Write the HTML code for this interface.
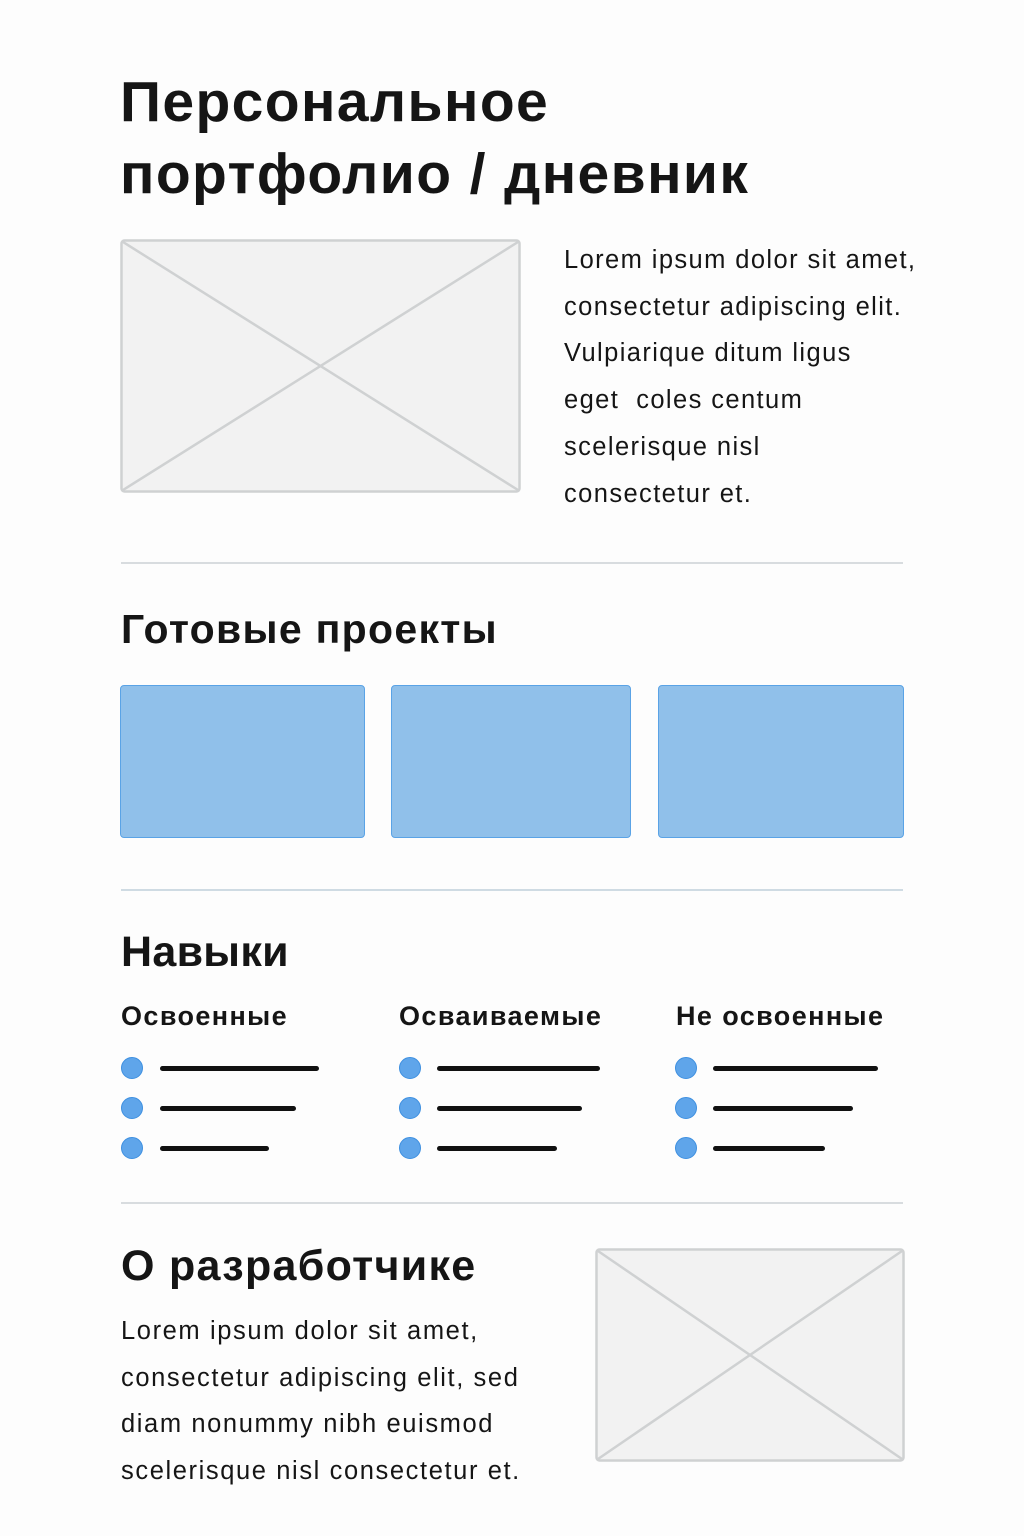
<!DOCTYPE html>
<html><head><meta charset="utf-8"><style>
*{margin:0;padding:0;box-sizing:border-box}
body{width:1024px;height:1536px;background:#fdfdfd;position:relative;font-family:"Liberation Sans","DejaVu Sans",sans-serif;color:#151515;overflow:hidden}
.a{position:absolute;white-space:nowrap}
h1{position:absolute;left:120px;top:66px;font-size:57px;line-height:72px;font-weight:bold;letter-spacing:1.4px}
.txt{font-size:25.5px;line-height:46.7px;letter-spacing:1.4px}
.hr{position:absolute;left:121px;width:782px;height:2px;background:#d8dcdf}
.blue{position:absolute;top:685px;height:153px;background:#90c0ea;border:1.5px solid #5aa3e6;border-radius:4px}
.h2{font-size:41px;font-weight:bold;letter-spacing:1.3px}
.h3{font-size:27px;font-weight:bold;letter-spacing:1.4px}
.dot{position:absolute;width:22px;height:22px;border-radius:50%;background:#5fa5ea;border:1px solid #3d8fe0}
.ln{position:absolute;height:5px;border-radius:3px;background:#111}
</style></head><body>
<h1>Персональное<br>портфолио / дневник</h1>
<svg class="a" style="left:120px;top:239px" width="401" height="254"><rect x="1.5" y="1.5" width="398" height="251" rx="3" fill="#f2f2f2" stroke="#cfd1d2" stroke-width="2.5"/><line x1="3" y1="3" x2="398" y2="251" stroke="#cfd1d2" stroke-width="2.5"/><line x1="398" y1="3" x2="3" y2="251" stroke="#cfd1d2" stroke-width="2.5"/></svg>
<div class="a txt" style="left:564px;top:237px">Lorem ipsum dolor sit amet,<br>consectetur adipiscing elit.<br>Vulpiarique ditum ligus<br>eget&nbsp; coles centum<br>scelerisque nisl<br>consectetur et.</div>
<div class="hr" style="top:562px"></div>
<div class="a h2" style="left:121px;top:606px">Готовые проекты</div>
<div class="blue" style="left:120px;width:245px"></div>
<div class="blue" style="left:391px;width:240px"></div>
<div class="blue" style="left:658px;width:246px"></div>
<div class="hr" style="top:889px;background:#cfdbe3"></div>
<div class="a h2" style="left:121px;top:928px;font-size:43px;letter-spacing:0.3px">Навыки</div>
<div class="a h3" style="left:121px;top:1001px">Освоенные</div>
<div class="a h3" style="left:399px;top:1001px">Осваиваемые</div>
<div class="a h3" style="left:676px;top:1001px">Не освоенные</div>
<div class="dot" style="left:121px;top:1057px"></div><div class="ln" style="left:160px;top:1066px;width:159px"></div>
<div class="dot" style="left:121px;top:1097px"></div><div class="ln" style="left:160px;top:1106px;width:136px"></div>
<div class="dot" style="left:121px;top:1137px"></div><div class="ln" style="left:160px;top:1146px;width:109px"></div>
<div class="dot" style="left:399px;top:1057px"></div><div class="ln" style="left:437px;top:1066px;width:163px"></div>
<div class="dot" style="left:399px;top:1097px"></div><div class="ln" style="left:437px;top:1106px;width:145px"></div>
<div class="dot" style="left:399px;top:1137px"></div><div class="ln" style="left:437px;top:1146px;width:120px"></div>
<div class="dot" style="left:675px;top:1057px"></div><div class="ln" style="left:713px;top:1066px;width:165px"></div>
<div class="dot" style="left:675px;top:1097px"></div><div class="ln" style="left:713px;top:1106px;width:140px"></div>
<div class="dot" style="left:675px;top:1137px"></div><div class="ln" style="left:713px;top:1146px;width:112px"></div>
<div class="hr" style="top:1202px"></div>
<div class="a h2" style="left:121px;top:1242px;font-size:43px">О разработчике</div>
<div class="a txt" style="left:121px;top:1308px;letter-spacing:1.6px">Lorem ipsum dolor sit amet,<br>consectetur adipiscing elit, sed<br>diam nonummy nibh euismod<br>scelerisque nisl consectetur et.</div>
<svg class="a" style="left:595px;top:1248px" width="310" height="214"><rect x="1.5" y="1.5" width="307" height="211" rx="3" fill="#f2f2f2" stroke="#cfd1d2" stroke-width="2.5"/><line x1="3" y1="3" x2="307" y2="211" stroke="#cfd1d2" stroke-width="2.5"/><line x1="307" y1="3" x2="3" y2="211" stroke="#cfd1d2" stroke-width="2.5"/></svg>
</body></html>
